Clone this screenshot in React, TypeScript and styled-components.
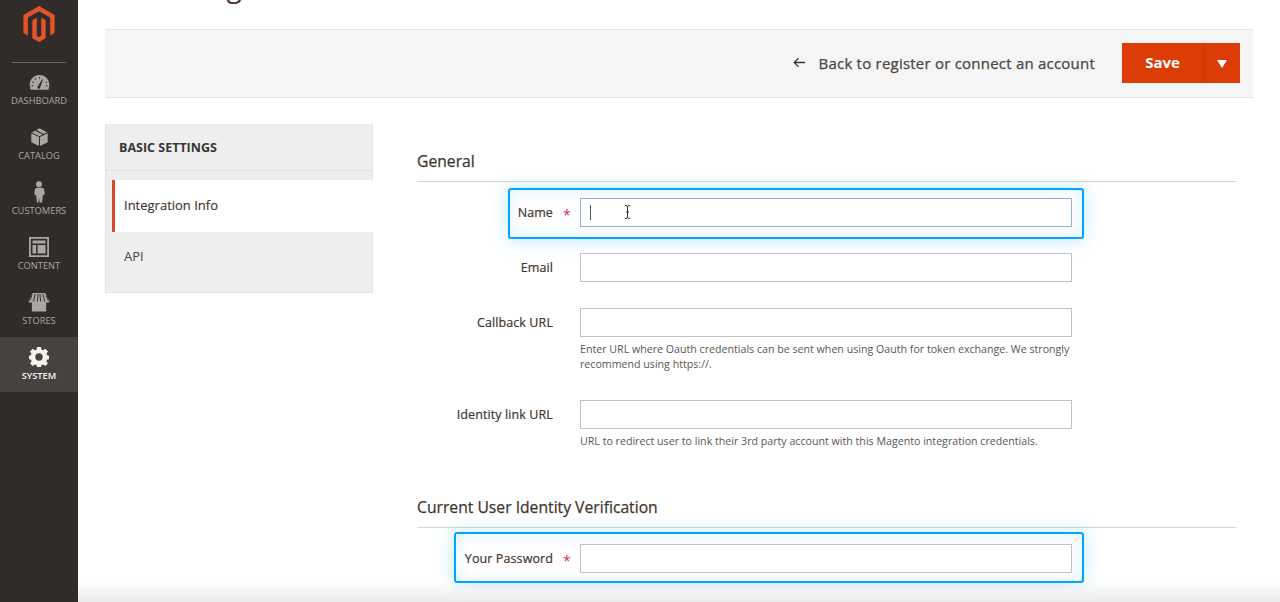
import React from 'react'
import styled, { createGlobalStyle } from 'styled-components'

const GlobalStyle = createGlobalStyle`
  html, body {
    margin: 0;
    height: 100%;
    overflow: hidden;
    background: #fff;
    font-family: "Open Sans", "Liberation Sans", sans-serif;
    color: #41362f;
  }
  * { box-sizing: border-box; }
`

const Logo = () => (
  <svg width="36" height="36" viewBox="0 0 24 24" fill="#e2532a">
    <path d="M12 24l-4.455-2.572v-12l2.97-1.715v12.001L12 20.856l1.485-1.142V7.713l2.97 1.715v12L12 24zM22.391 6v12l-2.969 1.714V7.713L12 3.43 4.574 7.713v12L1.609 18V6L12 0l10.391 6z" />
  </svg>
)

const DashboardIcon = () => (
  <svg width="21" height="15" viewBox="0 0 22 16" fill="currentColor">
    <path fillRule="evenodd" d="M11 0C4.900 0 .5 4.800.5 10.500c0 2 .4 3.700 1 5.200h19c.6-1.500 1-3.200 1-5.200C21.500 4.800 17.100 0 11 0zM9.300 11.900l4.500-7.300.8.400-2.800 8.100a1.500 1.500 0 1 1-2.500-1.200z" />
    <g fill="#312c2a">
      <circle cx="11" cy="2.800" r=".8" />
      <circle cx="6.600" cy="4.200" r=".8" />
      <circle cx="3.900" cy="7.600" r=".8" />
      <circle cx="3.200" cy="11.500" r=".8" />
      <circle cx="18.800" cy="11.500" r=".8" />
      <circle cx="18.100" cy="7.600" r=".8" />
    </g>
  </svg>
)

const CatalogIcon = () => (
  <svg width="17" height="18" viewBox="0 0 17 18" fill="currentColor">
    <path d="M.3 5.200 8 9v9L.3 14.200z" />
    <path d="M16.700 5.200 9 9v9l7.700-3.800z" />
    <path d="M8.500 8.200.9 4.400 4 2.700l7.600 3.900zM12.700 5.900 5.200 2.100 8.500.3l7.600 4.100z" />
  </svg>
)

const CustomersIcon = () => (
  <svg width="12" height="22" viewBox="0 0 12 22" fill="currentColor">
    <circle cx="6" cy="3.200" r="3" />
    <path d="M3 6.800h6c1.200 0 2 .9 2.200 2l.6 4.800-1.800.4-.4 2.500-.5 5H6.600l-.6-5-.6 5H3.900l-.5-5-.4-2.500-1.800-.4.6-4.800c.2-1.100 1-2 2.200-2z" />
  </svg>
)

const ContentIcon = () => (
  <svg width="20" height="20" viewBox="0 0 20 20" fill="currentColor">
    <path fillRule="evenodd" d="M0 0h20v20H0zM1.800 1.800v16.400h16.400V1.800z" />
    <path d="M3.500 3.500h13v3h-13zM3.500 8h3.600v8.500H3.500zM8.600 8h7.900v8.500H8.600z" />
  </svg>
)

const StoresIcon = () => (
  <svg width="22" height="19" viewBox="0 0 22 20" fill="currentColor">
    <path d="M4.500 0h13l4.500 8.300c0 1.200-1 1.900-2.100 1.900-.5 0-1-.2-1.400-.5V19.500H3.500V9.700c-.4.300-.9.500-1.400.5C1 10.200 0 9.500 0 8.300z" />
    <g stroke="#312c2a" strokeWidth="1" fill="none">
      <path d="M7 1 5 9M10 1 9.300 9M12 1l.7 8M15 1l2 8M3.500 2.800 1 8.300M18.500 2.800 21 8.300" />
    </g>
  </svg>
)

const SystemIcon = () => (
  <svg width="20" height="20" viewBox="0 0 20 20" fill="currentColor">
    <path fillRule="evenodd" d="M8 0h4l.5 2.700 1.500.6L16.300 1.800 19 4.500l-1.500 2.300.6 1.400L20 8.700v3.600l-2 .5-.6 1.400L18.900 16.500 16.300 19 14 17.500l-1.500.6L12 20H8l-.5-1.900-1.500-.6L3.700 19 1.100 16.500 2.600 14.200 2 12.800l-2-.5V8.700l1.900-.5.6-1.400L1 4.500l2.700-2.700L6 3.300l1.500-.6zM10 6.300a3.700 3.700 0 1 0 0 7.400 3.700 3.700 0 0 0 0-7.400z" />
  </svg>
)

const navItems = [
  { label: 'DASHBOARD', icon: <DashboardIcon /> },
  { label: 'CATALOG', icon: <CatalogIcon /> },
  { label: 'CUSTOMERS', icon: <CustomersIcon /> },
  { label: 'CONTENT', icon: <ContentIcon /> },
  { label: 'STORES', icon: <StoresIcon /> },
  { label: 'SYSTEM', icon: <SystemIcon />, active: true },
]

const App = () => {
  return (
    <Page>
      <GlobalStyle />
      <Sidebar>
        <LogoBox>
          <Logo />
        </LogoBox>
        <Nav>
          {navItems.map((item) => (
            <NavItem key={item.label} $active={item.active}>
              <NavIcon>{item.icon}</NavIcon>
              <span>{item.label}</span>
            </NavItem>
          ))}
        </Nav>
      </Sidebar>
      <Main>
        <TitleClip>
          <Title>New Integration</Title>
        </TitleClip>
        <Toolbar>
          <BackLink>
            <BackArrow viewBox="0 0 14 12" fill="none" stroke="#41362f" strokeWidth="1.4">
              <path d="M13 6H1.500M6 1.200 1.200 6 6 10.800" />
            </BackArrow>
            Back to register or connect an account
          </BackLink>
          <SaveGroup>
            <SaveButton>Save</SaveButton>
            <SaveToggle>
              <Triangle viewBox="0 0 10 8" fill="#fff">
                <path d="M0 0h10L5 8z" />
              </Triangle>
            </SaveToggle>
          </SaveGroup>
        </Toolbar>
        <Columns>
          <SidePanel>
            <PanelTitle>BASIC SETTINGS</PanelTitle>
            <PanelGap />
            <PanelLinkActive>Integration Info</PanelLinkActive>
            <PanelLink>API</PanelLink>
          </SidePanel>
          <FormArea>
            <SectionHeading>General</SectionHeading>
            <Field $focus $boxLeft={91} $boxTop={-10} $boxBottom={-12}>
              <FieldLabel>Name</FieldLabel>
              <Star>*</Star>
              <InputCol>
                <FakeInput $focus>
                  <Caret />
                  <IBeam viewBox="0 0 7 14" fill="none" stroke="#333" strokeWidth="1">
                    <path d="M.8.6h1.300c.8 0 1.400.4 1.400 1.200v10.400c0 .8.600 1.200 1.400 1.200h1.300M6.200.6H4.900c-.8 0-1.400.4-1.400 1.200M3.500 12.200c0 .8-.6 1.200-1.400 1.200H.8M2 7h3" />
                  </IBeam>
                </FakeInput>
              </InputCol>
            </Field>
            <Field>
              <FieldLabel>Email</FieldLabel>
              <Star />
              <InputCol>
                <FakeInput />
              </InputCol>
            </Field>
            <Field>
              <FieldLabel>Callback URL</FieldLabel>
              <Star />
              <InputCol>
                <FakeInput />
                <Note>
                  Enter URL where Oauth credentials can be sent when using Oauth for token exchange. We strongly recommend using https://.
                </Note>
              </InputCol>
            </Field>
            <Field>
              <FieldLabel>Identity link URL</FieldLabel>
              <Star />
              <InputCol>
                <FakeInput />
                <Note>URL to redirect user to link their 3rd party account with this Magento integration credentials.</Note>
              </InputCol>
            </Field>
            <SectionHeading $second>Current User Identity Verification</SectionHeading>
            <Field $focus $boxLeft={37} $boxTop={-12} $boxBottom={-10}>
              <FieldLabel>Your Password</FieldLabel>
              <Star>*</Star>
              <InputCol>
                <FakeInput />
              </InputCol>
            </Field>
          </FormArea>
        </Columns>
      </Main>
      <BottomFade />
    </Page>
  )
}

export default App

const Page = styled.div`
  display: flex;
  width: 1280px;
  height: 602px;
  overflow: hidden;
  position: relative;
`
const Sidebar = styled.aside`
  width: 78px;
  flex-shrink: 0;
  background: #312c2a;
`
const LogoBox = styled.div`
  display: flex;
  justify-content: center;
  align-items: flex-start;
  height: 63px;
  margin: 0 12px;
  padding-top: 6px;
  border-bottom: 1px solid #6b6866;
`
const Nav = styled.nav`
  display: flex;
  flex-direction: column;
  margin-top: -1px;
`
const NavItem = styled.div<{ $active?: boolean }>`
  height: 55px;
  display: flex;
  flex-direction: column;
  align-items: center;
  justify-content: flex-end;
  padding-bottom: 9px;
  font-size: 9.3px;
  line-height: 14px;
  background: ${(p) => (p.$active ? '#454240' : 'transparent')};
  color: ${(p) => (p.$active ? '#f7f3eb' : '#aaa6a0')};
  font-weight: ${(p) => (p.$active ? 600 : 400)};
`
const NavIcon = styled.div`
  height: 24px;
  display: flex;
  align-items: center;
  justify-content: center;
`
const Main = styled.main`
  flex: 1;
  padding: 0 27px 0 27px;
  min-width: 0;
`
const TitleClip = styled.div`
  height: 29px;
  overflow: hidden;
`
const Title = styled.h1`
  margin: -33px 0 0 5px;
  font-size: 28px;
  line-height: 38px;
  font-weight: 400;
  color: #41362f;
`
const Toolbar = styled.div`
  height: 69px;
  display: flex;
  align-items: center;
  justify-content: flex-end;
  padding: 0 13px 2px 0;
  background: #f5f5f5;
  border-top: 1px solid #e6e6e6;
  border-bottom: 1px solid #e6e6e6;
`
const BackLink = styled.div`
  display: flex;
  align-items: center;
  font-size: 15px;
  letter-spacing: 0.22px;
  -webkit-text-stroke: 0.25px #4a4542;
  color: #4a4542;
  margin-right: 27px;
`
const BackArrow = styled.svg`
  width: 13px;
  height: 11px;
  margin-right: 13px;
`
const SaveGroup = styled.div`
  display: flex;
  height: 40px;
`
const SaveButton = styled.div`
  width: 81px;
  display: flex;
  align-items: center;
  justify-content: center;
  padding-bottom: 2px;
  background: #dc3c06;
  color: #fff;
  font-size: 15px;
  font-weight: 700;
`
const SaveToggle = styled.div`
  width: 37px;
  display: flex;
  align-items: center;
  justify-content: center;
  background: #dc3c06;
  border-left: 1px solid #c23a0c;
`
const Triangle = styled.svg`
  width: 10px;
  height: 8px;
  margin-top: 2px;
`
const Columns = styled.div`
  display: flex;
  gap: 44px;
  align-items: flex-start;
`
const SidePanel = styled.div`
  width: 268px;
  margin-top: 26px;
  background: #eeeeee;
  border: 1px solid #e4e4e4;
  border-top: none;
`
const PanelTitle = styled.div`
  height: 47px;
  padding-left: 13px;
  display: flex;
  align-items: center;
  font-size: 12.5px;
  font-weight: 700;
  color: #3a3532;
  border-bottom: 1px solid #e0e0e0;
`
const PanelGap = styled.div`
  height: 9px;
`
const PanelLinkActive = styled.div`
  height: 52px;
  margin-left: 6px;
  margin-right: -1px;
  padding: 0 0 2px 9px;
  display: flex;
  align-items: center;
  background: #fff;
  border-left: 3px solid #d2492b;
  font-size: 13px;
  -webkit-text-stroke: 0.15px #41362f;
  color: #41362f;
`
const PanelLink = styled.div`
  height: 60px;
  padding: 15px 0 0 18px;
  font-size: 13px;
  line-height: 18px;
  color: #4a4542;
`
const FormArea = styled.div`
  width: 819px;
  padding-top: 53px;
`
const SectionHeading = styled.h2<{ $second?: boolean }>`
  margin: ${(p) => (p.$second ? '46px' : '0')} 0 16px;
  height: 31px;
  font-size: 15.7px;
  line-height: 21px;
  font-weight: 400;
  -webkit-text-stroke: 0.25px #41362f;
  color: #41362f;
  border-bottom: 1px solid #d6d6ce;
`
const Field = styled.div<{ $focus?: boolean; $boxLeft?: number; $boxTop?: number; $boxBottom?: number }>`
  position: relative;
  display: flex;
  align-items: flex-start;
  width: 655px;
  margin-bottom: 26px;
  ${(p) =>
    p.$focus &&
    `
    &::before {
      content: "";
      position: absolute;
      top: ${p.$boxTop}px;
      bottom: ${p.$boxBottom}px;
      left: ${p.$boxLeft}px;
      right: -12px;
      border: 2px solid #00a5ff;
      border-radius: 3px;
      box-shadow: 0 0 18px rgba(0, 165, 255, 0.28), inset 0 0 16px rgba(0, 165, 255, 0.14);
    }
  `}
`
const FieldLabel = styled.label`
  width: 136px;
  flex-shrink: 0;
  text-align: right;
  font-size: 12.5px;
  letter-spacing: 0.1px;
  -webkit-text-stroke: 0.2px #41362f;
  line-height: 29px;
  color: #41362f;
  position: relative;
`
const Star = styled.span`
  width: 27px;
  height: 29px;
  flex-shrink: 0;
  padding-left: 10px;
  font-size: 14px;
  line-height: 34px;
  color: #d6304a;
  position: relative;
`
const InputCol = styled.div`
  width: 492px;
  flex-shrink: 0;
  position: relative;
`
const FakeInput = styled.div<{ $focus?: boolean }>`
  position: relative;
  height: 29px;
  background: #fff;
  border: 1px solid ${(p) => (p.$focus ? '#8fb0e0' : '#c2c2c2')};
`
const Caret = styled.div`
  position: absolute;
  left: 9px;
  top: 6px;
  width: 1px;
  height: 15px;
  background: #555;
`
const IBeam = styled.svg`
  position: absolute;
  left: 43px;
  top: 6px;
  width: 7px;
  height: 14px;
`
const Note = styled.div`
  margin: 5px 0 2px;
  font-size: 10.65px;
  line-height: 15px;
  color: #5c5552;
`
const BottomFade = styled.div`
  position: absolute;
  left: 78px;
  right: 0;
  bottom: 0;
  height: 20px;
  background: linear-gradient(to bottom, rgba(236, 236, 236, 0), rgba(232, 232, 232, 0.9));
  pointer-events: none;
`
